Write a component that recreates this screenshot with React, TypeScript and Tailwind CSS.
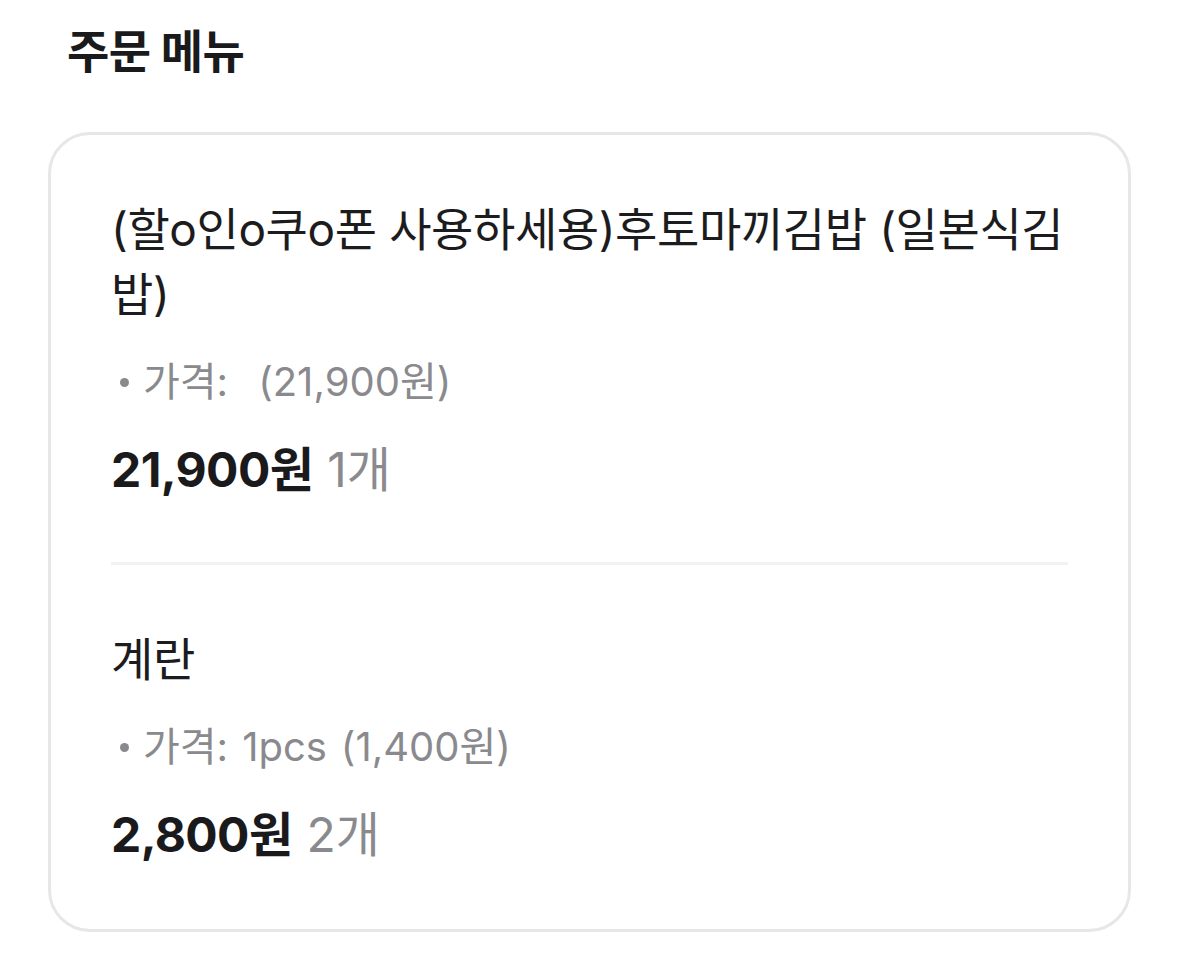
const items = [
  {
    name: "(할o인o쿠o폰 사용하세용)후토마끼김밥 (일본식김밥)",
    option: "",
    unit: "21,900원",
    total: "21,900원",
    qty: 1,
  },
  {
    name: "계란",
    option: "1pcs",
    unit: "1,400원",
    total: "2,800원",
    qty: 2,
  },
];

const font = { fontFamily: 'Inter, "Noto Sans CJK KR", sans-serif' };

export default function App() {
  return (
    <div className="min-h-screen bg-white text-[#1a1a1a]" style={font}>
      <div className="px-[48px] pt-[22px] pb-[44px]">
        <h2 className="pl-[19px] text-[46px] leading-[58px] font-bold tracking-[-0.6px] text-[#1a1a1c]">
          주문 메뉴
        </h2>

        <div className="mt-[52px] rounded-[42px] border-[3px] border-[#e7e7ea] px-[60px] pt-[62px] pb-[64px]">
          {items.map((item, i) => (
            <div key={i}>
              {i > 0 && <div className="h-[3px] bg-[#f2f2f4] my-[62px]" />}
              <div className="text-[46px] leading-[65px] text-[#1c1c1e] tracking-[-0.4px]">
                {item.name}
              </div>
              <div className="mt-[29px] flex items-center text-[40px] leading-[52px] text-[#8a8a8e]">
                <span className="mr-[14px] ml-[9px] inline-block h-[9px] w-[9px] rounded-full bg-[#8a8a8e]" />
                <span>가격:</span>
                <span className="ml-[14px]">{item.option}</span>
                <span className={item.option ? "ml-[14px]" : "ml-[16px]"}>({item.unit})</span>
              </div>
              <div className="mt-[32px] flex items-baseline text-[48px] leading-[60px]">
                <span className="font-bold text-[#1a1a1c] tracking-[-0.6px]">{item.total}</span>
                <span className="ml-[14px] text-[#8a8a8e]">{item.qty}개</span>
              </div>
            </div>
          ))}
        </div>
      </div>
    </div>
  );
}
